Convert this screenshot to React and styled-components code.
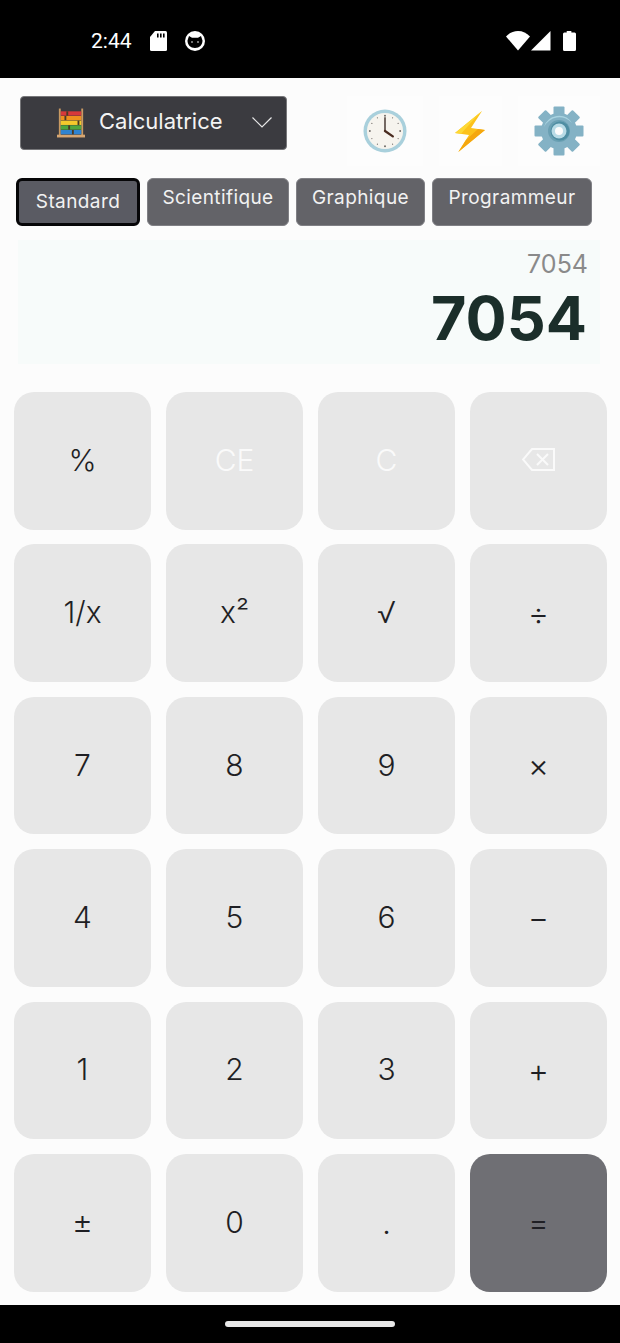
import React from "react";
import styled, { createGlobalStyle } from "styled-components";

const GlobalStyle = createGlobalStyle`
  html, body {
    margin: 0;
    padding: 0;
    background: #000;
  }
  * {
    box-sizing: border-box;
  }
`;

const Page = styled.div`
  width: 620px;
  height: 1343px;
  display: flex;
  flex-direction: column;
  background: #fcfcfc;
  font-family: Inter, "Liberation Sans", sans-serif;
  overflow: hidden;
`;

const StatusBar = styled.div`
  height: 78px;
  flex-shrink: 0;
  background: #000;
  color: #fff;
  display: flex;
  align-items: center;
  padding: 4px 44px 0 91px;
`;

const Time = styled.span`
  font-family: Roboto, sans-serif;
  font-size: 21px;
`;

const StatusLeft = styled.div`
  display: flex;
  align-items: center;
  gap: 18px;
  flex: 1;
`;

const StatusRight = styled.div`
  display: flex;
  align-items: center;
  gap: 1px;
`;

const Main = styled.main`
  flex: 1;
  display: flex;
  flex-direction: column;
`;

const Toolbar = styled.div`
  display: flex;
  justify-content: space-between;
  align-items: flex-start;
  padding: 18px 20px 0;
`;

const ModeSelect = styled.div`
  width: 267px;
  height: 54px;
  display: flex;
  align-items: center;
  padding: 0 14px 0 36px;
  gap: 14px;
  background: #3b3b40;
  border: 1px solid #77777a;
  border-radius: 4px;
  color: #f4f4f4;
  font-size: 22px;
`;

const ModeLabel = styled.span`
  flex: 1;
  padding-bottom: 4px;
`;

const ActionIcons = styled.div`
  display: flex;
  height: 70px;
`;

const ActionButton = styled.button`
  height: 70px;
  padding: 0 16px;
  margin-left: ${(p) => (p.$first ? 0 : 16)}px;
  display: flex;
  align-items: center;
  border: none;
  background: #fdfdfd;
`;

const Tabs = styled.div`
  display: flex;
  gap: 7px;
  padding: 12px 0 0 16px;
`;

const Tab = styled.button`
  width: ${(p) => p.$width}px;
  height: 48px;
  display: flex;
  justify-content: center;
  align-items: ${(p) => (p.$active ? "center" : "flex-start")};
  padding: ${(p) => (p.$active ? "0 0 1px" : "7px 0 0")};
  background: ${(p) => (p.$active ? "#5a5b63" : "#636368")};
  border: ${(p) => (p.$active ? "3px solid #060608" : "1px solid #808085")};
  border-radius: 6px;
  color: #f2f2f2;
  font-family: inherit;
  font-size: 19px;
  letter-spacing: 0.4px;
`;

const Display = styled.div`
  height: 124px;
  margin: 14px 20px 0 18px;
  padding: 9px 13px 0 0;
  background: #f7fbfa;
  text-align: right;
`;

const History = styled.div`
  font-size: 25px;
  line-height: 30px;
  color: #8a8a8a;
  margin-right: -1px;
`;

const Result = styled.div`
  font-size: 61px;
  line-height: 78px;
  font-weight: 700;
  color: #1b2e2a;
`;

const Keypad = styled.div`
  display: grid;
  grid-template-columns: repeat(4, 137px);
  grid-auto-rows: 137.6px;
  column-gap: 15px;
  row-gap: 14.8px;
  padding: 28px 0 0 14px;
`;

const Key = styled.button`
  display: flex;
  justify-content: center;
  align-items: center;
  border: none;
  border-radius: 20px;
  background: ${(p) => (p.$accent ? "#6f6f74" : "#e7e7e7")};
  color: ${(p) => (p.$light ? "#fafafa" : "#1f1f24")};
  font-family: inherit;
  font-size: ${(p) => (p.$small ? 32 : 30)}px;
  font-weight: ${(p) => (p.$small ? 300 : 350)};
  padding: ${(p) => (p.$small ? "0" : "0 0 2px")};
`;

const NavBar = styled.div`
  height: 38px;
  flex-shrink: 0;
  background: #000;
  display: flex;
  justify-content: center;
  padding-top: 16px;
`;

const NavPill = styled.div`
  width: 170px;
  height: 6px;
  border-radius: 3px;
  background: #e8e8e8;
`;

function SdIcon() {
  return (
    <svg width="17" height="20" viewBox="0 0 17 20">
      <path d="M5 0h10.500A1.500 1.500 0 0 1 17 1.500v17a1.500 1.500 0 0 1-1.500 1.500h-14A1.500 1.500 0 0 1 0 18.500V6z" fill="#fff" />
      <path d="M7 2.500h1.600v4H7zM10 2.500h1.600v4H10zM13 2.500h1.600v4H13z" fill="#000" />
    </svg>
  );
}

function CatIcon() {
  return (
    <svg width="20" height="20" viewBox="0 0 20 20">
      <circle cx="10" cy="10" r="10" fill="#fff" />
      <path d="M2.500 9.500 4 5 7 6.800h6L16 5l1.500 4.500c0 4.500-3 7.500-7.500 7.500s-7.500-3-7.500-7.500z" fill="#000" />
      <circle cx="7" cy="11" r=".8" fill="#fff" />
      <circle cx="13" cy="11" r=".8" fill="#fff" />
    </svg>
  );
}

function WifiIcon() {
  return (
    <svg width="24" height="20" viewBox="0 0 24 20">
      <path d="M0 5.500C3.200 2 7.400 0 12 0s8.800 2 12 5.500L12 19.500z" fill="#fff" />
    </svg>
  );
}

function SignalIcon() {
  return (
    <svg width="20" height="20" viewBox="0 0 20 20">
      <path d="M19.500 0v19.500H0z" fill="#fff" />
    </svg>
  );
}

function BatteryIcon() {
  return (
    <svg width="13" height="20" viewBox="0 0 14 20" preserveAspectRatio="none" style={{ marginLeft: 11 }}>
      <path d="M4 0h5v1.500h3.500A1.500 1.500 0 0 1 14 3v15.500a1.500 1.500 0 0 1-1.500 1.500h-11A1.500 1.500 0 0 1 0 18.500V3a1.500 1.500 0 0 1 1.500-1.500H4z" fill="#fff" />
    </svg>
  );
}

function AbacusIcon() {
  const rows = [
    { y: 3, c: "#d8383a", bead: 10 },
    { y: 8, c: "#ef8f1e", bead: 8 },
    { y: 13, c: "#f4c92c", bead: 22 },
    { y: 18, c: "#4fa63e", bead: 12 },
    { y: 23, c: "#2f83d0", bead: 16 },
  ];
  return (
    <svg width="28" height="30" viewBox="0 0 30 31">
      <rect x="2" y="0" width="2" height="29" fill="#c99a63" />
      <rect x="26" y="0" width="2" height="29" fill="#c99a63" />
      <rect x="0" y="28" width="30" height="3" fill="#d6a671" />
      {rows.map((r) => (
        <g key={r.y}>
          <rect x="4" y={r.y} width="22" height="4.600" fill={r.c} />
          <rect x={r.bead} y={r.y} width="2" height="4.600" fill="#4a3a24" />
        </g>
      ))}
    </svg>
  );
}

function ClockIcon() {
  const ticks = Array.from({ length: 12 }, (_, i) => (i * Math.PI) / 6);
  return (
    <svg width="44" height="44" viewBox="0 0 45 45">
      <circle cx="22.500" cy="22.500" r="22" fill="#a9d0dc" />
      <circle cx="22.500" cy="22.500" r="18.500" fill="#f6f4ee" />
      {ticks.map((a, i) => (
        <circle
          key={i}
          cx={22.5 + 15.5 * Math.sin(a)}
          cy={22.5 - 15.5 * Math.cos(a)}
          r={i % 3 === 0 ? 1 : 0.6}
          fill="#6f6a66"
        />
      ))}
      <path d="M22.500 8.500v14" stroke="#3a2a24" strokeWidth="1.400" />
      <path d="M22.500 22.500l8 5.500" stroke="#4a2c20" strokeWidth="2.400" strokeLinecap="round" />
    </svg>
  );
}

function BoltIcon() {
  return (
    <svg width="31" height="41" viewBox="0 0 31 41">
      <path d="M27 0 0 22l14 2-10.700 17L30 19l-14-2z" fill="#fcc21b" />
      <path d="M3.300 41 30 19l-7-1L11 29z" fill="#f5a70f" />
      <path d="M27 0 0 22l6 .8L21 6z" fill="#fdd835" />
    </svg>
  );
}

function GearIcon() {
  const teeth = Array.from({ length: 8 }, (_, i) => i * 45);
  return (
    <svg width="50" height="50" viewBox="0 0 50 50">
      {teeth.map((a) => (
        <rect key={a} x="19.500" y="0.500" width="11" height="12" rx="1" fill="#84b2c5" transform={`rotate(${a} 25 25)`} />
      ))}
      <circle cx="25" cy="25" r="18" fill="#84b2c5" />
      <path d="M10 21A15.500 15.500 0 0 1 38 17 17 17 0 0 0 10 21z" fill="#a9d3e0" />
      <circle cx="25" cy="25" r="11" fill="#6aa0b3" />
      <circle cx="26" cy="25" r="9.500" fill="#4f8ea3" />
      <circle cx="25" cy="25" r="7.500" fill="#b8dbe6" />
      <circle cx="25" cy="25" r="4" fill="#fcfcfc" />
    </svg>
  );
}

function ChevronIcon() {
  return (
    <svg width="20" height="11" viewBox="0 0 20 11" style={{ marginBottom: 2 }}>
      <path d="M.5.500 10 10 19.500.500" fill="none" stroke="#e8e8e8" strokeWidth="1.200" />
    </svg>
  );
}

function BackspaceIcon() {
  return (
    <svg width="33" height="23" viewBox="0 0 33 23">
      <path d="M32 1H10L1 11.500 10 22h22z" fill="none" stroke="#fafafa" strokeWidth="2" />
      <path d="M15 6l11 11M26 6 15 17" stroke="#fafafa" strokeWidth="2" fill="none" />
    </svg>
  );
}

const tabs = [
  { label: "Standard", width: 124, active: true },
  { label: "Scientifique", width: 142 },
  { label: "Graphique", width: 129 },
  { label: "Programmeur", width: 160 },
];

const keys = [
  { label: "%" },
  { label: "CE", light: true },
  { label: "C", light: true },
  { label: <BackspaceIcon /> },
  { label: "1/x" },
  { label: "x²" },
  { label: "√" },
  { label: "÷", small: true },
  { label: "7" },
  { label: "8" },
  { label: "9" },
  { label: "×", small: true },
  { label: "4" },
  { label: "5" },
  { label: "6" },
  { label: "−", small: true },
  { label: "1" },
  { label: "2" },
  { label: "3" },
  { label: "+", small: true },
  { label: "±", small: true },
  { label: "0" },
  { label: ".", small: true },
  { label: "=", small: true, accent: true },
];

export default function App() {
  return (
    <Page>
      <GlobalStyle />
      <StatusBar>
        <StatusLeft>
          <Time>2:44</Time>
          <SdIcon />
          <CatIcon />
        </StatusLeft>
        <StatusRight>
          <WifiIcon />
          <SignalIcon />
          <BatteryIcon />
        </StatusRight>
      </StatusBar>
      <Main>
        <Toolbar>
          <ModeSelect>
            <AbacusIcon />
            <ModeLabel>Calculatrice</ModeLabel>
            <ChevronIcon />
          </ModeSelect>
          <ActionIcons>
            <ActionButton $first>
              <ClockIcon />
            </ActionButton>
            <ActionButton>
              <BoltIcon />
            </ActionButton>
            <ActionButton>
              <GearIcon />
            </ActionButton>
          </ActionIcons>
        </Toolbar>
        <Tabs>
          {tabs.map((t) => (
            <Tab key={t.label} $width={t.width} $active={t.active}>
              {t.label}
            </Tab>
          ))}
        </Tabs>
        <Display>
          <History>7054</History>
          <Result>7054</Result>
        </Display>
        <Keypad>
          {keys.map((k, i) => (
            <Key key={i} $light={k.light} $small={k.small} $accent={k.accent}>
              {k.label}
            </Key>
          ))}
        </Keypad>
      </Main>
      <NavBar>
        <NavPill />
      </NavBar>
    </Page>
  );
}
